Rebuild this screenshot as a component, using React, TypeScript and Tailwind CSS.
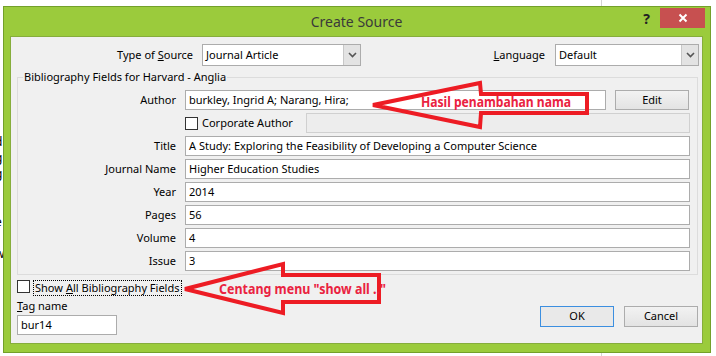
import React from 'react'

const fields = [
  ['Title', 'A Study: Exploring the Feasibility of Developing a Computer Science'],
  ['Journal Name', 'Higher Education Studies'],
  ['Year', '2014'],
  ['Pages', '56'],
  ['Volume', '4'],
  ['Issue', '3'],
]

const bgLetters = ['r', 'd', 'g', 'g', 'f', 'j', 'e', 'l', 'w', '', 't']

function Chevron() {
  return (
    <svg width="9" height="6" viewBox="0 0 9 6">
      <path d="M1 1 L4.5 4.5 L8 1" fill="none" stroke="#555" strokeWidth="1.6" />
    </svg>
  )
}

function Select({ value, width }: { value: string; width: string }) {
  return (
    <div className={`flex h-[22px] border border-[#acacac] bg-white ${width}`}>
      <div className="flex flex-1 items-center pl-[3px]">{value}</div>
      <div className="flex w-[17px] items-center justify-center border-l border-[#c8c8c8] bg-[#e3e3e3]">
        <Chevron />
      </div>
    </div>
  )
}

function Annotations() {
  return (
    <svg className="pointer-events-none absolute left-0 top-0 z-20" width="716" height="356">
      <path
        d="M373 105 L480 83 L481 94 L587 94 L587 113 L481 113 L480 127 Z"
        fill="none"
        stroke="#ed1c24"
        strokeWidth="4"
      />
      <path
        d="M185 289 L283 264 L283 275 L379 275 L379 302 L283 302 L283 313 Z"
        fill="none"
        stroke="#ed1c24"
        strokeWidth="4"
      />
      <text
        x="421"
        y="107"
        fill="#ea2240"
        fontFamily="Noto Sans, sans-serif"
        fontWeight="700"
        fontSize="14"
        textLength="150"
        lengthAdjust="spacingAndGlyphs"
      >
        Hasil penambahan nama
      </text>
      <text
        x="219"
        y="294"
        fill="#ea2240"
        fontFamily="Noto Sans, sans-serif"
        fontWeight="700"
        fontSize="14"
        textLength="167"
        lengthAdjust="spacingAndGlyphs"
      >
        Centang menu "show all .."
      </text>
    </svg>
  )
}

export default function App() {
  return (
    <div className="relative h-[356px] w-[716px] overflow-hidden bg-white font-['Noto_Sans',sans-serif] text-[11px] text-black">
      {/* document behind the dialog */}
      <div className="absolute left-[601px] top-0 h-full w-px bg-[#d4d4d4]" />

      <div className="flex pt-[6px]">
        <div className="w-[3px] overflow-hidden pt-[112px] text-[12px] leading-[16px]">
          {bgLetters.map((l, i) => (
            <div key={i} className="-ml-[5px] h-[16px]">{l}</div>
          ))}
        </div>

        {/* dialog */}
        <div className="relative z-10 flex h-[347px] w-[708px] flex-col border border-[#73a02a] bg-[#9bcb3c] pb-[8px] pl-[6px] pr-[7px]">
          {/* title bar */}
          <div className="relative flex h-[29px] items-center justify-center">
            <span className="text-[14px] text-[#3a3a3a]">Create Source</span>
            <div className="absolute right-[-2px] top-0 flex items-center gap-[10px]">
              <span className="pt-[1px] text-[14px] font-bold text-[#222]">?</span>
              <div className="flex h-[20px] w-[45px] items-center justify-center bg-[#c75050]">
                <svg width="10" height="10" viewBox="0 0 10 10">
                  <path d="M1.5 1.5 L8.5 8.5 M8.5 1.5 L1.5 8.5" stroke="white" strokeWidth="2" />
                </svg>
              </div>
            </div>
          </div>

          {/* content */}
          <div className="flex flex-1 flex-col border border-[#86ad3c] bg-[#f0f0f0]">
            {/* type of source */}
            <div className="mt-[7px] flex items-center">
              <div className="w-[182px] text-right">
                Type of <span className="underline">S</span>ource
              </div>
              <div className="ml-[9px]">
                <Select value="Journal Article" width="w-[159px]" />
              </div>
              <div className="ml-auto">
                <span className="underline">L</span>anguage
              </div>
              <div className="ml-[10px] mr-[3px]">
                <Select value="Default" width="w-[144px]" />
              </div>
            </div>

            {/* bibliography group */}
            <fieldset className="ml-[6px] mr-[4px] mt-[3px] border border-[#dcdcdc] pb-[3px]">
              <legend className="ml-[5px] px-[1px] leading-[16px]">Bibliography Fields for Harvard - Anglia</legend>
              <div className="mt-[5px] flex flex-col gap-[3px]">
                <div className="flex h-[20px] items-center gap-[9px]">
                  <div className="w-[158px] text-right">Author</div>
                  <div className="flex h-[20px] w-[421px] items-center border border-[#acacac] bg-white pl-[3px]">
                    burkley, Ingrid A; Narang, Hira;
                  </div>
                  <button className="h-[20px] w-[74px] border border-[#acacac] bg-gradient-to-b from-[#f2f2f2] to-[#e3e3e3]">
                    Edit
                  </button>
                </div>
                <div className="flex h-[20px] items-center pr-[7px]">
                  <div className="w-[167px]" />
                  <div className="h-[13px] w-[13px] border border-[#333] bg-white" />
                  <span className="ml-[4px] flex-1">Corporate Author</span>
                  <div className="h-[20px] w-[384px] border border-[#d0d0d0] bg-[#ededed]" />
                </div>
                {fields.map(([label, value]) => (
                  <div key={label} className="flex h-[20px] items-center gap-[9px]">
                    <div className="w-[158px] text-right">{label}</div>
                    <div className="flex h-[20px] w-[505px] items-center border border-[#acacac] bg-white pl-[3px]">
                      {value}
                    </div>
                  </div>
                ))}
              </div>
            </fieldset>

            {/* bottom */}
            <div className="flex flex-col pl-[6px] pr-[4px] pt-[5px]">
              <div className="flex h-[16px] items-start">
                <div className="h-[13px] w-[13px] border border-[#333] bg-white" />
                <div className="ml-[3px] flex h-[16px] items-center border border-dotted border-black px-[1px]">
                  Show <span className="ml-[3px] underline">A</span>ll Bibliography Fields
                </div>
              </div>
              <div className="mt-[1px] flex items-start justify-between">
                <div className="flex flex-col">
                  <div className="leading-[18px]">
                    <span className="underline">T</span>ag name
                  </div>
                  <div className="flex h-[20px] w-[100px] items-center border border-[#acacac] bg-white pl-[3px]">
                    bur14
                  </div>
                </div>
                <div className="mt-[9px] flex gap-[10px]">
                  <button className="h-[21px] w-[74px] border border-[#3c8fe0] bg-[#e9e9e9]">OK</button>
                  <button className="h-[21px] w-[74px] border border-[#acacac] bg-gradient-to-b from-[#f2f2f2] to-[#e3e3e3]">
                    Cancel
                  </button>
                </div>
              </div>
            </div>
          </div>
        </div>
      </div>

      <Annotations />
    </div>
  )
}
